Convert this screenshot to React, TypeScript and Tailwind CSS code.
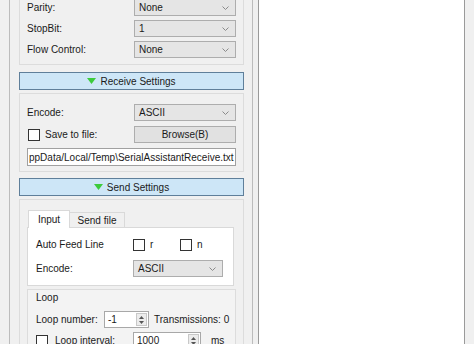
import React from 'react'

function Chevron() {
  return (
    <svg width="7" height="4" viewBox="0 0 7 4" className="shrink-0">
      <path d="M0.5 0.5 L3.5 3.5 L6.5 0.5" fill="none" stroke="#8a8a8a" strokeWidth="1" />
    </svg>
  )
}

function Combo({ value, className }: { value: string; className: string }) {
  return (
    <div className={`h-[17px] bg-[#e5e5e5] border border-[#adadad] flex items-center justify-between pl-[4px] pr-[6px] ${className}`}>
      <span>{value}</span>
      <Chevron />
    </div>
  )
}

function Check() {
  return <div className="w-[12px] h-[12px] bg-white border border-[#333333] shrink-0" />
}

function SpinArrows() {
  return (
    <div className="w-[11px] h-[13px] mr-[1px] bg-[#ececec] border border-[#c8c8c8] flex flex-col items-center justify-center gap-[2px]">
      <svg width="5" height="3" viewBox="0 0 5 3">
        <path d="M0 3 L2.5 0 L5 3 Z" fill="#555" />
      </svg>
      <svg width="5" height="3" viewBox="0 0 5 3">
        <path d="M0 0 L2.5 3 L5 0 Z" fill="#555" />
      </svg>
    </div>
  )
}

function SpinBox({ value, className }: { value: string; className: string }) {
  return (
    <div className={`h-[17px] bg-white border border-[#a8a8a8] flex items-center justify-between pl-[3px] ${className}`}>
      <span>{value}</span>
      <SpinArrows />
    </div>
  )
}

function SectionBar({ title }: { title: string }) {
  return (
    <div className="ml-[9px] w-[225px] h-[18px] bg-[#cde6f7] border border-[#5f7f9a] flex items-center justify-center gap-[4px]">
      <svg width="9" height="6" viewBox="0 0 9 6">
        <path d="M0 0 L9 0 L4.5 6 Z" fill="#3ccb3c" />
      </svg>
      <span>{title}</span>
    </div>
  )
}

export default function App() {
  return (
    <div className="w-[474px] h-[344px] overflow-hidden bg-[#f0f0f0] flex font-['Liberation_Sans',Arial,sans-serif] text-[10px] text-[#1a1a1a]">
      {/* Left settings panel */}
      <div className="ml-[9px] w-[244px] h-full border-x border-[#bcbcbc] flex flex-col">
        {/* Serial settings (scrolled) */}
        <div className="ml-[9px] w-[225px] border-x border-b border-[#dcdcdc] pl-[7px] pr-[7px] pb-[6px] -mt-[1px] flex flex-col gap-[4px]">
          <div className="flex items-center justify-between">
            <span>Parity:</span>
            <Combo value="None" className="w-[102px]" />
          </div>
          <div className="flex items-center justify-between">
            <span>StopBit:</span>
            <Combo value="1" className="w-[102px]" />
          </div>
          <div className="flex items-center justify-between">
            <span>Flow Control:</span>
            <Combo value="None" className="w-[102px]" />
          </div>
        </div>

        {/* Receive Settings */}
        <div className="mt-[7px]">
          <SectionBar title="Receive Settings" />
        </div>
        <div className="mt-[3px] ml-[9px] w-[225px] border border-[#dcdcdc] pt-[10px] pb-[5px] pl-[7px] pr-[7px] flex flex-col gap-[5px]">
          <div className="flex items-center justify-between">
            <span>Encode:</span>
            <Combo value="ASCII" className="w-[102px]" />
          </div>
          <div className="flex items-center justify-between">
            <div className="flex items-center gap-[5px] pl-[1px]">
              <Check />
              <span>Save to file:</span>
            </div>
            <div className="w-[102px] h-[17px] bg-[#e1e1e1] border border-[#adadad] flex items-center justify-center">
              Browse(B)
            </div>
          </div>
          <div className="h-[18px] bg-white border border-[#a0a0a0] flex items-center overflow-hidden whitespace-nowrap pl-[1px]">
            ppData/Local/Temp\SerialAssistantReceive.txt
          </div>
        </div>

        {/* Send Settings */}
        <div className="mt-[6px]">
          <SectionBar title="Send Settings" />
        </div>
        <div className="mt-[3px] ml-[9px] w-[225px] flex-1 border border-[#dcdcdc] pt-[10px] pl-[7px] pr-[8px] flex flex-col">
          {/* Tabs */}
          <div className="flex items-end h-[18px] pl-[1px]">
            <div className="h-[18px] w-[42px] bg-white border-x border-t border-[#d9d9d9] flex items-center justify-center relative z-10">
              Input
            </div>
            <div className="h-[16px] w-[55px] bg-[#f0f0f0] border-r border-t border-[#d9d9d9] flex items-center justify-center">
              Send file
            </div>
          </div>
          <div className="-mt-[1px] h-[59px] w-[207px] bg-white border border-[#d9d9d9] pl-[8px] pt-[9px] flex flex-col gap-[8px]">
            <div className="flex items-center">
              <span className="w-[97px]">Auto Feed Line</span>
              <div className="flex items-center gap-[5px] w-[47px]">
                <Check />
                <span>r</span>
              </div>
              <div className="flex items-center gap-[5px]">
                <Check />
                <span>n</span>
              </div>
            </div>
            <div className="flex items-center">
              <span className="w-[97px]">Encode:</span>
              <Combo value="ASCII" className="w-[90px]" />
            </div>
          </div>

          {/* Loop */}
          <div className="mt-[3px] w-[209px] flex-1 border border-[#dcdcdc] bg-[#f3f3f3] pl-[8px] pt-[2px] flex flex-col">
            <span className="leading-[12px]">Loop</span>
            <div className="mt-[7px] flex items-center">
              <span className="w-[68px]">Loop number:</span>
              <SpinBox value="-1" className="w-[45px]" />
              <span className="ml-[5px]">Transmissions: 0</span>
            </div>
            <div className="mt-[4px] flex items-center">
              <Check />
              <span className="ml-[7px] w-[78px]">Loop interval:</span>
              <SpinBox value="1000" className="w-[68px]" />
              <span className="ml-[10px]">ms</span>
            </div>
          </div>
        </div>
      </div>

      {/* Receive text area */}
      <div className="ml-[5px] w-[207px] -my-[2px] h-[348px] bg-white border border-[#9a9a9a]" />
    </div>
  )
}
